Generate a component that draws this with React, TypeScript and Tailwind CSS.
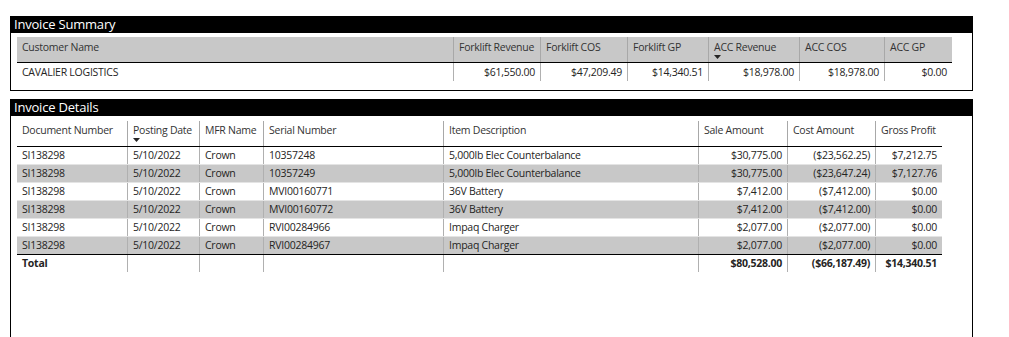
import React from "react";

const FONT = "font-['Open_Sans','Noto_Sans',sans-serif]";
const TXT = "text-[10.5px] tracking-[-0.25px]";

const sumCols = [
  { label: "Customer Name", w: "w-[436px]", right: false },
  { label: "Forklift Revenue", w: "w-[87px]", right: true },
  { label: "Forklift COS", w: "w-[87px]", right: true },
  { label: "Forklift GP", w: "w-[81px]", right: true },
  { label: "ACC Revenue", w: "w-[91px]", right: true, sort: true },
  { label: "ACC COS", w: "w-[85px]", right: true },
  { label: "ACC GP", w: "w-[68px]", right: true },
];
const sumRow = ["CAVALIER LOGISTICS", "$61,550.00", "$47,209.49", "$14,340.51", "$18,978.00", "$18,978.00", "$0.00"];

const detCols = [
  { label: "Document Number", w: "w-[110px]", right: false },
  { label: "Posting Date", w: "w-[72px]", right: false, sort: true },
  { label: "MFR Name", w: "w-[64px]", right: false },
  { label: "Serial Number", w: "w-[180px]", right: false },
  { label: "Item Description", w: "w-[255px]", right: false },
  { label: "Sale Amount", w: "w-[89px]", right: true },
  { label: "Cost Amount", w: "w-[88px]", right: true },
  { label: "Gross Profit", w: "w-[67px]", right: true },
];

const detRows = [
  ["SI138298", "5/10/2022", "Crown", "10357248", "5,000lb Elec Counterbalance", "$30,775.00", "($23,562.25)", "$7,212.75"],
  ["SI138298", "5/10/2022", "Crown", "10357249", "5,000lb Elec Counterbalance", "$30,775.00", "($23,647.24)", "$7,127.76"],
  ["SI138298", "5/10/2022", "Crown", "MVI00160771", "36V Battery", "$7,412.00", "($7,412.00)", "$0.00"],
  ["SI138298", "5/10/2022", "Crown", "MVI00160772", "36V Battery", "$7,412.00", "($7,412.00)", "$0.00"],
  ["SI138298", "5/10/2022", "Crown", "RVI00284966", "Impaq Charger", "$2,077.00", "($2,077.00)", "$0.00"],
  ["SI138298", "5/10/2022", "Crown", "RVI00284967", "Impaq Charger", "$2,077.00", "($2,077.00)", "$0.00"],
];
const totalRow = ["Total", "", "", "", "", "$80,528.00", "($66,187.49)", "$14,340.51"];

function SortArrow() {
  return (
    <svg width="7" height="4" viewBox="0 0 7 4" className="block">
      <path d="M0 0 L7 0 L3.5 4 Z" fill="#252423" />
    </svg>
  );
}

export default function App() {
  return (
    <div className={`w-[1009px] h-[337px] bg-white overflow-hidden ${FONT} text-[#252423]`}>
      <div className="pt-[16px] pl-[10px] flex flex-col gap-[8px]">
        {/* Summary */}
        <div className="w-[963px] h-[75px] border border-black border-t-0 flex flex-col">
          <div className="h-[17px] bg-black text-white text-[13px] tracking-[-0.2px] leading-[17px] pl-[4px] -mx-[1px]">Invoice Summary</div>
          <div className="pl-[6px] pt-[4px]">
            <div className="flex w-fit bg-[#c8c8c8] h-[26px] border-b border-black">
              {sumCols.map((c, i) => (
                <div
                  key={i}
                  className={`${c.w} shrink-0 pl-[5px] pt-[2px] ${TXT} leading-[16px] whitespace-nowrap text-[#333] ${i > 0 ? "border-l border-[#a8a8a8]" : ""}`}
                >
                  <div>{c.label}</div>
                  {c.sort ? <SortArrow /> : null}
                </div>
              ))}
            </div>
            <div className="flex w-fit h-[18px]">
              {sumCols.map((c, i) => (
                <div
                  key={i}
                  className={`${c.w} shrink-0 px-[5px] ${TXT} leading-[18px] whitespace-nowrap ${c.right ? "text-right" : ""} ${i > 0 ? "border-l border-[#b0b0b0]" : ""}`}
                >
                  {sumRow[i]}
                </div>
              ))}
            </div>
          </div>
        </div>

        {/* Details */}
        <div className="w-[963px] h-[260px] border-l border-r border-black flex flex-col">
          <div className="h-[17px] bg-black text-white text-[13px] tracking-[-0.2px] leading-[17px] pl-[4px] -mx-[1px]">Invoice Details</div>
          <div className="pl-[6px] pt-[5px]">
            <div className="flex w-fit h-[26px] border-b border-black">
              {detCols.map((c, i) => (
                <div
                  key={i}
                  className={`${c.w} shrink-0 pl-[5px] pt-[1px] ${TXT} leading-[16px] whitespace-nowrap text-[#333] ${i > 0 ? "border-l border-[#a8a8a8]" : ""}`}
                >
                  <div>{c.label}</div>
                  {c.sort ? <SortArrow /> : null}
                </div>
              ))}
            </div>
            {detRows.map((r, ri) => (
              <div key={ri} className={`flex w-fit h-[18px] border-b ${ri === 5 ? "border-black" : "border-[#e4e4e4]"} ${ri % 2 === 1 ? "bg-[#c8c8c8]" : "bg-white"}`}>
                {detCols.map((c, i) => (
                  <div
                    key={i}
                    className={`${c.w} shrink-0 px-[5px] ${TXT} leading-[17px] whitespace-nowrap ${c.right ? "text-right" : ""} ${i > 0 ? "border-l border-[#b0b0b0]" : ""}`}
                  >
                    {r[i]}
                  </div>
                ))}
              </div>
            ))}
            <div className="flex w-fit h-[17px]">
              {detCols.map((c, i) => (
                <div
                  key={i}
                  className={`${c.w} shrink-0 px-[5px] ${TXT} leading-[17px] font-bold whitespace-nowrap ${c.right ? "text-right" : ""} ${i > 0 ? "border-l border-[#b0b0b0]" : ""}`}
                >
                  {totalRow[i]}
                </div>
              ))}
            </div>
          </div>
        </div>
      </div>
    </div>
  );
}
